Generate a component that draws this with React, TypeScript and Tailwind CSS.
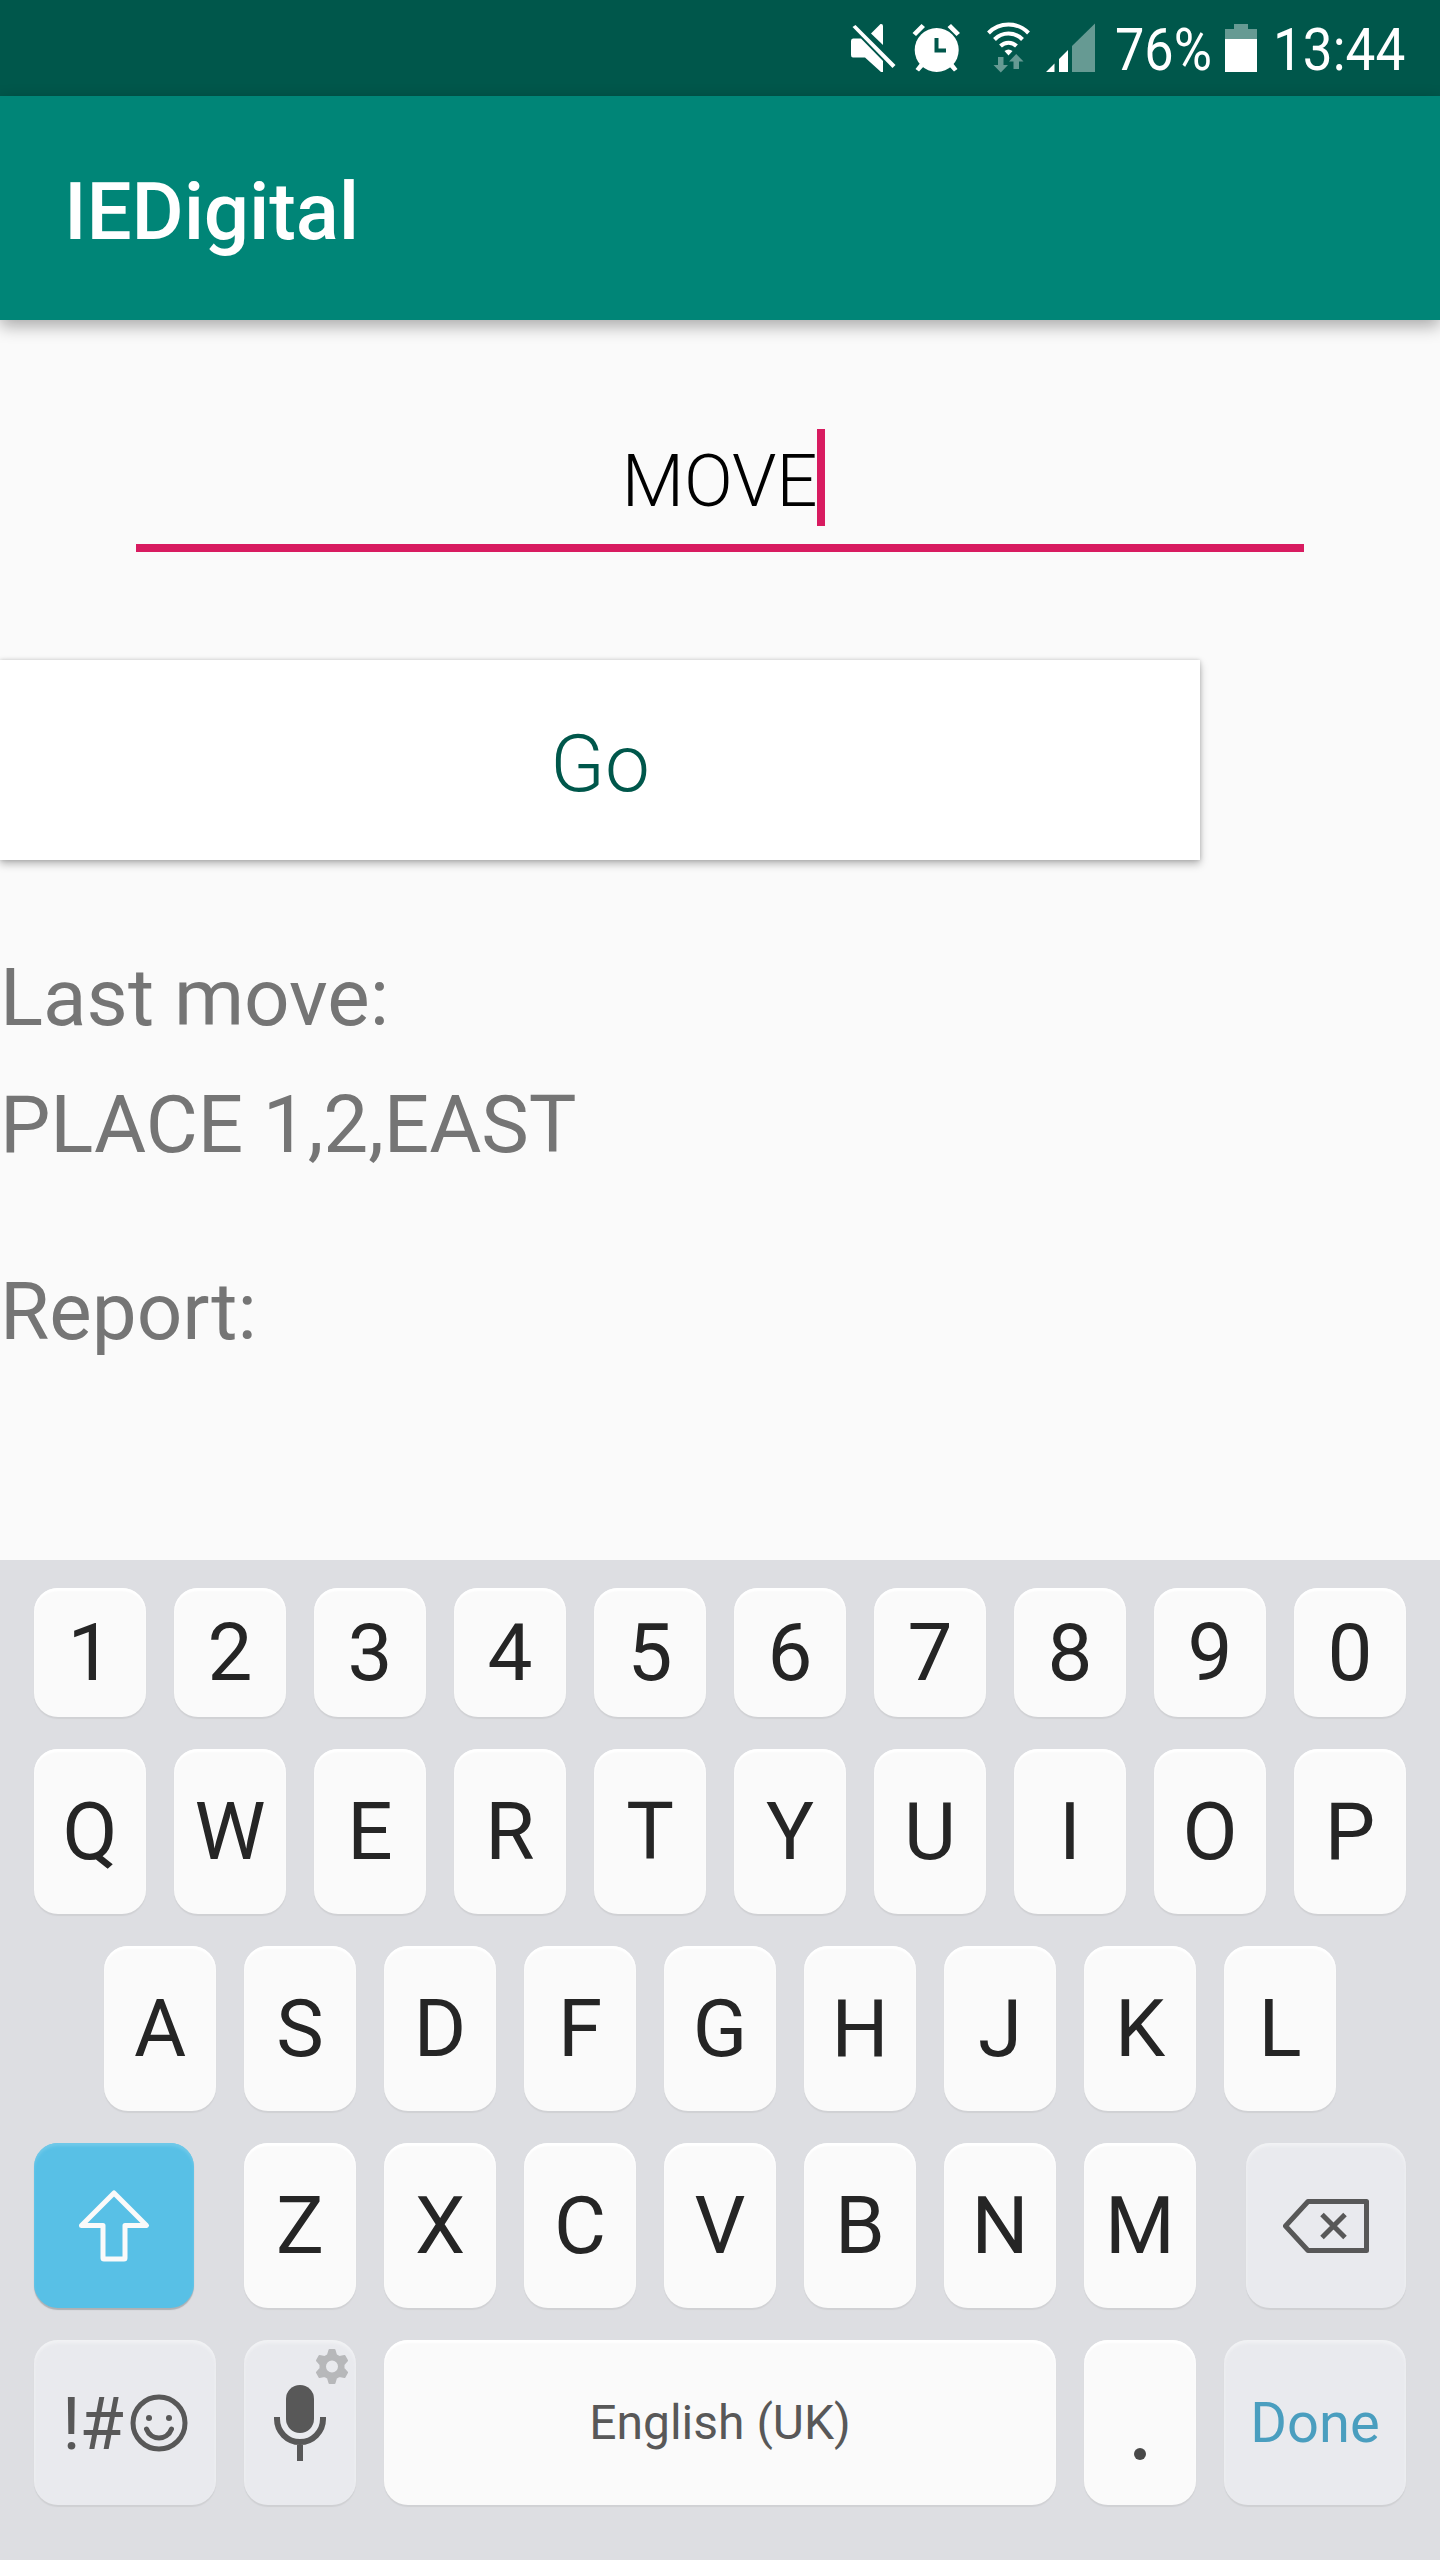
import type { ReactNode } from 'react';

const DIGITS = '1234567890'.split('');
const TOP = 'QWERTYUIOP'.split('');
const HOME = 'ASDFGHJKL'.split('');
const BOTTOM = 'ZXCVBNM'.split('');

type Tone = 'light' | 'grey' | 'blue';

const TONES: Record<Tone, string> = {
  light: 'bg-[#fafafa] shadow-[0_2px_1px_#d0d1d4,inset_0_3px_2px_#ffffff]',
  grey: 'bg-[#e9eaee] shadow-[0_2px_1px_#cfd0d3,inset_0_3px_3px_#f1f2f4]',
  blue: 'bg-[#58c0e6] shadow-[0_2px_1px_#adb1b5,inset_0_3px_3px_#70c9e9]',
};

function Key({ children, tone = 'light', className = 'w-28' }: { children: ReactNode; tone?: Tone; className?: string }) {
  return (
    <button
      type="button"
      className={`relative flex h-full shrink-0 items-center justify-center rounded-[24px] pt-px text-[80px] leading-none text-[#252525] ${TONES[tone]} ${className}`}
    >
      {children}
    </button>
  );
}

function StatusBar() {
  return (
    <div className="flex h-24 items-start bg-[#00574b] text-white">
      <svg className="ml-[850px] mt-[22px] h-[52px] w-[272px] shrink-0" viewBox="850 22 272 52" fill="#fff">
        <path d="M853 38.5H861L883 61V72L881 72L865 57.5H853Q851 57.5 851 55V41Q851 38.5 853 38.5Z" />
        <path d="M871 33.500L880.500 24Q883 23.500 883 26V45Z" />
        <path d="M852.500 27L855.500 25L895.500 65L892.500 68Z" />
        <circle cx="936.700" cy="50" r="22" />
        <path d="M912.500 33L921.500 24L925 27L916 36ZM960 33L951 24L947.500 27L956.500 36ZM915.500 69L921 62L925 65L919 71.500ZM957.500 69L952 62L948 65L954 71.500Z" />
        <path d="M936.500 38V50.500H946" fill="none" stroke="#00574b" strokeWidth="4" />
        <g fill="none" stroke="#fff" strokeWidth="4">
          <path d="M988.500 33A28 28 0 0 1 1028.500 33" />
          <path d="M994.500 39.500A19.500 19.500 0 0 1 1022.500 39.500" />
          <path d="M1000.500 46A11.500 11.500 0 0 1 1016.500 46" />
        </g>
        <path d="M1004.500 51Q1008.500 48 1012.500 51L1008.500 55.500Z" />
        <path d="M998 57H1003.500V65H1008L1000.800 72.500L993.500 65H998ZM1013.500 69V61.500H1009L1016.200 54L1023.500 61.500H1019V69Z" fill="#669a93" />
        <path d="M1046 72L1054.500 63.500V72ZM1059 72V59L1068 50V72Z" />
        <path d="M1072 72V46L1095 23.500V72Z" fill="#669a93" />
      </svg>
      <div className="-ml-[7px] mt-[15px] w-[100px] whitespace-nowrap">
        <span className="inline-block origin-left scale-x-[.87] text-[60px] leading-[70px]">76%</span>
      </div>
      <svg className="ml-[10px] mt-6 h-12 w-8 shrink-0" viewBox="0 0 32 48">
        <path d="M0 5H9V0H23V5H32V15H0Z" fill="#669a93" />
        <path d="M0 15H32V48H0Z" fill="#fff" />
      </svg>
      <span className="ml-[16px] mt-[15px] inline-block origin-left scale-x-[.885] whitespace-nowrap text-[60px] leading-[70px]">13:44</span>
    </div>
  );
}

function Keyboard() {
  return (
    <div className="flex h-[1000px] flex-col gap-8 bg-[#dddee2] px-[34px] pt-7">
      <div className="flex h-[129px] gap-7">
        {DIGITS.map((k) => (
          <Key key={k}>{k}</Key>
        ))}
      </div>
      <div className="flex h-[165px] gap-7">
        {TOP.map((k) => (
          <Key key={k}>{k}</Key>
        ))}
      </div>
      <div className="flex h-[165px] justify-center gap-7">
        {HOME.map((k) => (
          <Key key={k}>{k}</Key>
        ))}
      </div>
      <div className="flex h-[165px] justify-between">
        <Key tone="blue" className="w-40">
          <svg className="h-[76px] w-[76px]" viewBox="0 0 76 76" fill="none" stroke="#fafafa" strokeWidth="5" strokeLinejoin="round">
            <path d="M38 5L70.500 37.500H49V70Q49 71 48 71H28Q27 71 27 70V37.500H5.500Z" />
          </svg>
        </Key>
        <div className="flex gap-7">
          {BOTTOM.map((k) => (
            <Key key={k}>{k}</Key>
          ))}
        </div>
        <Key tone="grey" className="w-40">
          <svg className="h-[54px] w-[86px]" viewBox="0 0 86 54" fill="none" stroke="#585858" strokeWidth="5" strokeLinejoin="round">
            <path d="M25 2.500H83.500V51.500H25L2.500 27Z" />
            <path d="M39 15.500L62 38.500M62 15.500L39 38.500" />
          </svg>
        </Key>
      </div>
      <div className="flex h-[165px] gap-7">
        <Key tone="grey" className="w-[182px]">
          <span className="pt-[3px] text-[72px] tracking-[-1px] text-[#585858]">!#</span>
          <svg className="ml-[7px] h-[58px] w-[58px]" viewBox="0 0 58 58" fill="none" stroke="#585858" strokeWidth="5">
            <circle cx="29" cy="29" r="26" />
            <circle cx="19" cy="24" r="3" fill="#585858" stroke="none" />
            <circle cx="39" cy="24" r="3" fill="#585858" stroke="none" />
            <path d="M16.500 35C21 47 37 47 41.500 35" strokeLinecap="round" />
          </svg>
        </Key>
        <Key tone="grey">
          <svg className="h-[76px] w-[52px]" viewBox="0 0 52 76">
            <rect x="12" y="0" width="28" height="48" rx="14" fill="#585858" />
            <path d="M3 32V34A23 23 0 0 0 49 34V32M26 57V76" fill="none" stroke="#585858" strokeWidth="6" />
          </svg>
          <svg className="absolute right-2 top-[9px] h-[35px] w-[32px]" viewBox="0 0 32 35">
            <path
              fill="#b7b8ba"
              stroke="#b7b8ba"
              strokeWidth="2"
              strokeLinejoin="round"
              fillRule="evenodd"
              d="M13.500 1H18.500L20 6L23.500 8L28.500 7L31 11.500L27.500 15.500V19.500L31 23.500L28.500 28L23.500 27L20 29L18.500 34H13.500L12 29L8.500 27L3.500 28L1 23.500L4.500 19.500V15.500L1 11.500L3.500 7L8.500 8L12 6ZM16 10.500A7 7 0 1 0 16 24.500A7 7 0 1 0 16 10.500Z"
            />
          </svg>
        </Key>
        <Key className="w-[672px]">
          <span className="text-[48px] text-[#585858]">English (UK)</span>
        </Key>
        <Key>
          <span className="mt-[62px] h-3 w-3 rounded-full bg-[#484848]" />
        </Key>
        <Key tone="grey" className="w-[182px]">
          <span className="text-[56px] text-[#4a9ebf]">Done</span>
        </Key>
      </div>
    </div>
  );
}

export default function App() {
  return (
    <div className="flex h-[2560px] w-[1440px] flex-col overflow-hidden bg-[#fafafa] font-[Roboto,sans-serif]">
      <StatusBar />
      <header className="relative flex h-56 shrink-0 items-center bg-[#008577] pl-16 pt-[7px] shadow-[0_6px_16px_rgba(0,0,0,.33)]">
        <h1 className="text-[80px] font-medium leading-none tracking-[-0.15px] text-white">IEDigital</h1>
      </header>
      <main className="h-[1240px] shrink-0">
        <div className="mx-[136px] mt-[109px] flex h-[123px] items-start justify-center border-b-[8px] border-[#d81b60]">
          <span className="pt-[11px] text-[72px] font-light leading-[84px] text-black">MOVE</span>
          <span className="-mr-[7px] h-[97px] w-2 bg-[#d81b60]" />
        </div>
        <button
          type="button"
          className="mt-[108px] flex h-[200px] w-[1200px] items-center justify-center bg-white pt-[7px] text-[80px] font-light leading-none text-[#00574b] shadow-[0_4px_8px_rgba(0,0,0,.27),0_0_4px_rgba(0,0,0,.16)]"
        >
          Go
        </button>
        <div className="pt-[91px] text-[80px] leading-[94px] text-[#757575]">
          <p>Last move:</p>
          <p className="mt-[33px] tracking-[-0.1px]">PLACE 1,2,EAST</p>
          <p className="mt-[93px]">Report:</p>
        </div>
      </main>
      <Keyboard />
    </div>
  );
}
